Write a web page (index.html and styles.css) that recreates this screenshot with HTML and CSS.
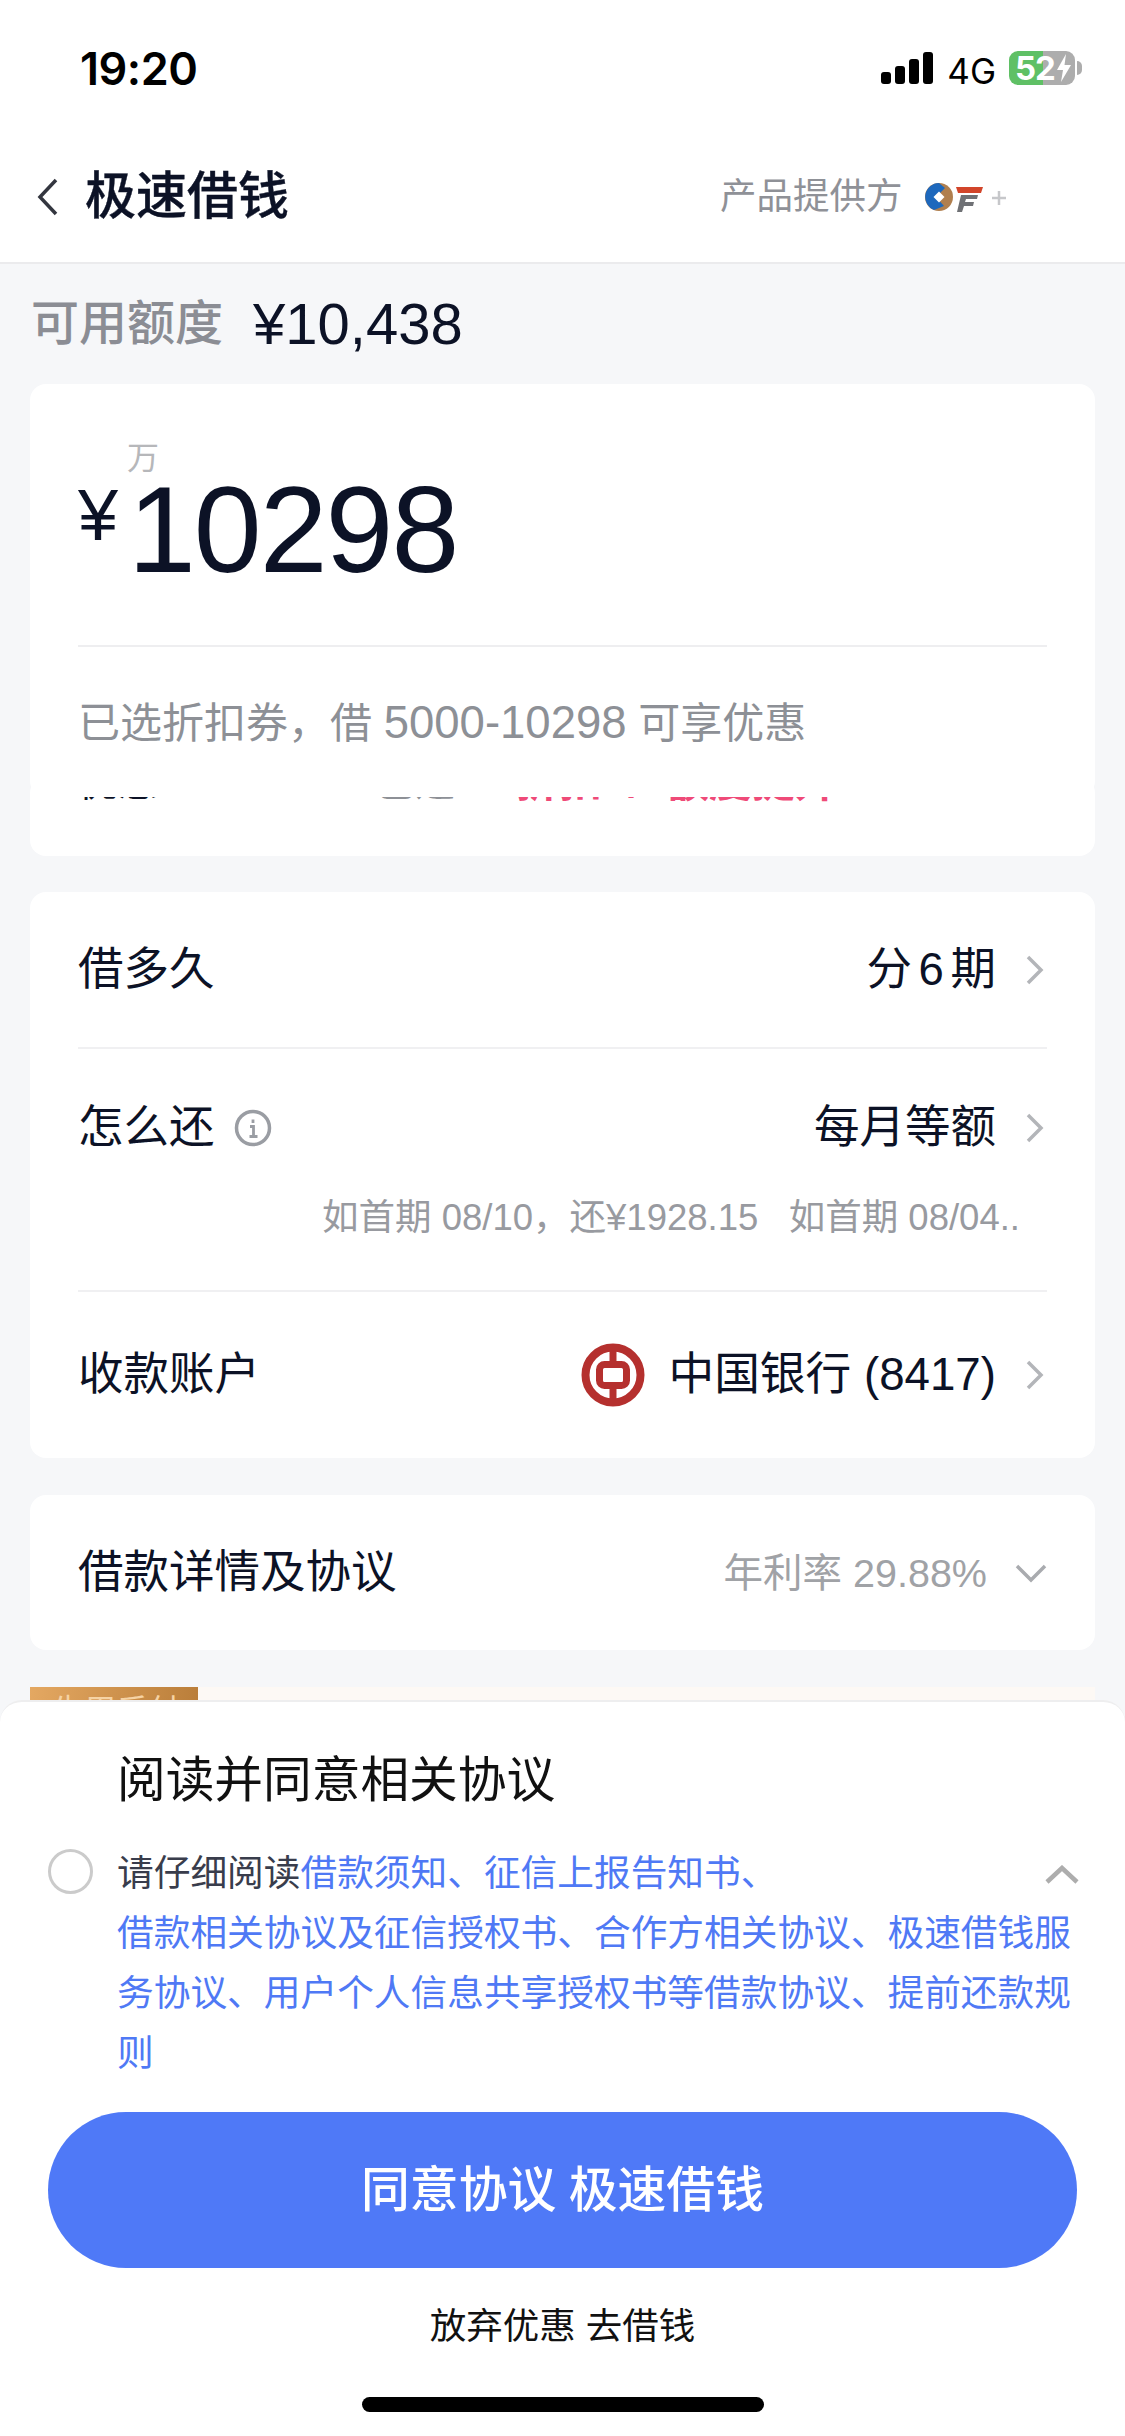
FILE: index.html
```html
<!DOCTYPE html>
<html lang="zh-CN">
<head>
<meta charset="utf-8">
<title>极速借钱</title>
<link rel="stylesheet" href="styles.css">
</head>
<body>
<div class="page">
  <header class="top">
    <div class="status">
      <span class="time">19:20</span>
      <div class="status-right">
        <div class="signal"><i class="b1"></i><i class="b2"></i><i class="b3"></i><i class="b4"></i></div>
        <span class="net">4G</span>
        <div class="battery">
          <span class="batt-num">52</span>
          <svg class="bolt" viewBox="0 0 16 28" width="16" height="28"><path d="M10 0 1 16h6l-2 12 10-17H8.500z" fill="#fff"/></svg>
        </div>
        <i class="batt-cap"></i>
      </div>
    </div>
    <nav class="nav">
      <svg class="back" viewBox="0 0 22 38" width="22" height="38"><path d="M19 2 3 19l16 17" fill="none" stroke="#33363f" stroke-width="3.500"/></svg>
      <h1 class="nav-title">极速借钱</h1>
      <span class="provider">产品提供方</span>
      <svg class="logo" viewBox="0 0 60 32" width="60" height="32">
        <circle cx="14" cy="16" r="14" fill="#b07f4e"/>
        <path d="M14 2A14 14 0 0 0 9 29l10-4-8-9 9-9z" fill="#1d68bd"/>
        <path d="M14 10.500l5.500 5.500-5.500 5.500L8.500 16z" fill="#fff"/>
        <path d="M31 6h27l-2 6H33z" fill="#d2452a"/>
        <path d="M36 14h17l-1 4H41l-1 3h9l-1 4h-9l-2 6h-5z" fill="#6f7175"/>
      </svg>
      <svg class="plus" viewBox="0 0 16 16" width="16" height="16"><path d="M8 1v14M1 8h14" stroke="#c6c7ca" stroke-width="2.500"/></svg>
    </nav>
  </header>

  <main class="content">
    <div class="limit">
      <span class="limit-label">可用额度</span>
      <span class="limit-value">¥10,438</span>
    </div>

    <section class="card amount-card">
      <div class="amount-unit">万</div>
      <div class="amount-row"><span class="yen">¥</span><span class="amount">10298</span></div>
      <div class="amount-line"></div>
      <p class="amount-hint">已选折扣券，借 <span class="hint-num">5000-10298</span> 可享优惠</p>
    </section>

    <section class="card peek-card">
      <div class="peek-row">
        <span class="peek-dark">优惠</span>
        <span class="peek-grey">已选</span>
        <span class="peek-pink">折扣 / 额度提升</span>
      </div>
    </section>

    <section class="card group">
      <div class="row row-first">
        <span class="label">借多久</span>
        <span class="value value-term">分 6 期</span>
        <svg class="chev" viewBox="0 0 20 30" width="20" height="30"><path d="M3 2l13 13L3 28" fill="none" stroke="#b3b5b9" stroke-width="3.500"/></svg>
      </div>
      <div class="row-block">
        <div class="row-inner">
          <span class="label">怎么还</span>
          <svg class="info" viewBox="0 0 38 38" width="38" height="38">
            <circle cx="19" cy="19" r="16.500" fill="none" stroke="#9a9da3" stroke-width="3.500"/>
            <path d="M19 10.500v3.500M16 17.500h3.500v10M15.500 27.500h8" fill="none" stroke="#9a9da3" stroke-width="2.800"/>
          </svg>
          <span class="value">每月等额</span>
          <svg class="chev" viewBox="0 0 20 30" width="20" height="30"><path d="M3 2l13 13L3 28" fill="none" stroke="#b3b5b9" stroke-width="3.500"/></svg>
        </div>
        <div class="sub">如首期 08/10，还¥1928.15&nbsp;&nbsp;&nbsp;如首期 08/04..</div>
      </div>
      <div class="row row-last">
        <span class="label">收款账户</span>
        <svg class="bank" viewBox="0 0 64 64" width="64" height="64">
          <circle cx="32" cy="32" r="27.500" fill="none" stroke="#b5302e" stroke-width="8"/>
          <path d="M32 4v56" stroke="#b5302e" stroke-width="7"/>
          <rect x="18.500" y="21.500" width="27" height="21" rx="5" fill="#fff" stroke="#b5302e" stroke-width="7"/>
        </svg>
        <span class="value value-bank">中国银行 (8417)</span>
        <svg class="chev" viewBox="0 0 20 30" width="20" height="30"><path d="M3 2l13 13L3 28" fill="none" stroke="#b3b5b9" stroke-width="3.500"/></svg>
      </div>
    </section>

    <section class="card detail">
      <span class="label">借款详情及协议</span>
      <span class="rate">年利率 29.88%</span>
      <svg class="chev-down" viewBox="0 0 32 20" width="32" height="20"><path d="M2 3l14 14L30 3" fill="none" stroke="#a9abaf" stroke-width="3.500"/></svg>
    </section>

    <section class="promo"><span class="promo-badge">先用后付</span></section>
  </main>

  <aside class="sheet">
    <h2 class="sheet-title">阅读并同意相关协议</h2>
    <div class="agree">
      <span class="check"></span>
      <p class="agree-text">请仔细阅读<a class="link">借款须知、征信上报告知书、<br>借款相关协议及征信授权书、合作方相关协议、极速借钱服务协议、用户个人信息共享授权书等借款协议、提前还款规则</a></p>
      <svg class="chev-up" viewBox="0 0 34 20" width="34" height="20"><path d="M2 17L17 3l15 14" fill="none" stroke="#adadad" stroke-width="4.500"/></svg>
    </div>
    <button class="cta">同意协议 极速借钱</button>
    <div class="skip">放弃优惠 去借钱</div>
    <div class="home"></div>
  </aside>
</div>
</body>
</html>
```
FILE: styles.css
```css
* { box-sizing: border-box; }
html, body { margin: 0; padding: 0; }
body {
  width: 1125px;
  height: 2436px;
  overflow: hidden;
  font-family: "Liberation Sans", "Noto Sans CJK SC", sans-serif;
  color: #0c1226;
  background: #f6f7f9;
}
h1, h2, p { margin: 0; font-weight: 400; }
.page { position: relative; width: 1125px; height: 2436px; overflow: hidden; }

.top { background: #fff; height: 264px; border-bottom: 2px solid #ebebed; }
.status { height: 110px; padding: 0 43px 0 80px; display: flex; justify-content: space-between; align-items: flex-start; }
.time { font-family: Inter, "Liberation Sans", sans-serif; font-size: 45px; font-weight: 600; color: #000; line-height: 50px; margin-top: 44px; letter-spacing: -0.500px; }
.status-right { display: flex; align-items: flex-start; margin-top: 51px; }
.signal { display: flex; align-items: flex-end; gap: 4px; height: 33px; width: 52px; margin-left: 1px; }
.signal i { display: block; width: 10px; background: #000; border-radius: 3px; }
.b1 { height: 12px; } .b2 { height: 18px; } .b3 { height: 25px; } .b4 { height: 32px; }
.net { font-family: Inter, "Liberation Sans", sans-serif; font-size: 35px; line-height: 40px; color: #000; margin: 0 13px 0 14px; }
.battery {
  width: 66px; height: 34px; border-radius: 9px;
  background: linear-gradient(90deg, #5fc065 0 52%, #adadad 52% 100%);
  display: flex; align-items: center; padding-left: 6px; gap: 1px;
}
.batt-num { font-family: Inter, "Liberation Sans", sans-serif; font-size: 33px; font-weight: 700; color: #fff; line-height: 34px; letter-spacing: -1px; }
.bolt { flex: none; }
.batt-cap { display: block; width: 5px; height: 14px; margin: 10px 0 0 2px; background: #adadad; border-radius: 0 5px 5px 0; }

.nav { height: 152px; display: flex; align-items: center; padding: 22px 0 0 37px; }
.back { flex: none; }
.nav-title { font-size: 51px; font-weight: 500; line-height: 60px; margin-left: 26px; color: #0c1226; -webkit-text-stroke: 0.400px #0c1226; }
.provider { font-size: 36.500px; line-height: 50px; color: #8f9197; margin-left: 431px; }
.logo { flex: none; margin-left: 22px; }
.plus { flex: none; margin-left: 6px; margin-top: 2px; }

.content { padding: 0 30px; }
.limit { height: 120px; display: flex; align-items: center; margin-left: 1px; }
.limit-label { font-size: 48px; color: #8b8d94; font-weight: 500; line-height: 60px; }
.limit-value { font-size: 58px; margin-left: 30px; line-height: 60px; color: #0c1226; }

.card { background: #fff; border-radius: 16px; }
.amount-card { position: relative; z-index: 1; height: 413px; padding: 57px 48px 0; }
.amount-unit { font-size: 32px; line-height: 34px; color: #b6b7ba; margin-left: 49px; }
.amount-row { display: flex; align-items: flex-start; height: 120px; margin-top: -5px; }
.yen { font-size: 72px; line-height: 72px; margin-top: 9px; width: 50px; color: #0c1226; }
.amount { font-size: 122px; line-height: 120px; letter-spacing: -2px; color: #0c1226; }
.amount-line { height: 2px; background: #eeeef0; margin-top: 55px; }
.amount-hint { font-size: 42px; line-height: 60px; color: #8d9096; margin-top: 46px; white-space: nowrap; }
.hint-num { font-size: 45.500px; }

.peek-card { margin-top: -20px; height: 79px; padding: 0 48px; overflow: hidden; }
.peek-row { display: grid; grid-template-columns: 297px 141px 1fr; font-size: 40px; line-height: 46px; margin-top: -18px; }
.peek-dark { color: #0c1226; }
.peek-grey { color: #8d9096; }
.peek-pink { color: #ef4a78; font-weight: 700; font-size: 43px; word-spacing: 14px; white-space: nowrap; }

.group { margin-top: 36px; padding: 0 48px; }
.row { display: flex; align-items: center; }
.row-first { height: 157px; border-bottom: 2px solid #f0f0f2; }
.row-block { padding: 49px 0 42px; border-bottom: 2px solid #f0f0f2; }
.row-inner { display: flex; align-items: center; height: 60px; }
.row-last { height: 166px; }
.label { font-size: 45.500px; line-height: 60px; color: #0c1226; }
.value { font-size: 45.500px; line-height: 60px; margin-left: auto; color: #0c1226; }
.value-term { word-spacing: -6px; }
.value-bank { margin-left: 23px; font-size: 45.700px; }
.chev { flex: none; margin-left: 29px; margin-right: 2px; }
.info { flex: none; margin-left: 19px; }
.bank { flex: none; margin-left: auto; }
.sub { font-size: 36.500px; line-height: 60px; color: #989aa0; margin-top: 30px; text-align: right; padding-right: 27px; white-space: nowrap; }

.detail { margin-top: 37px; height: 155px; padding: 0 48px; display: flex; align-items: center; }
.rate { font-size: 39.500px; line-height: 60px; color: #a0a2a6; margin-left: auto; }
.chev-down { flex: none; margin-left: 28px; }

.promo { margin-top: 37px; height: 60px; background: #fdf9f5; overflow: hidden; }
.promo-badge {
  display: block; width: 168px; height: 60px; padding: 4px 0 0 22px;
  font-size: 32px; line-height: 40px; color: #f6d3a4;
  background: linear-gradient(100deg, #e4a862, #b87c38);
  white-space: nowrap;
}

.sheet {
  position: absolute; left: 0; right: 0; top: 1700px; bottom: 0;
  background: #fff; border-top: 2px solid #eeeeef;
  border-radius: 22px 22px 0 0;
  padding-top: 48px;
}
.sheet-title { font-size: 48.700px; line-height: 60px; margin-left: 117px; color: #111; }
.agree { position: relative; display: flex; align-items: flex-start; margin-top: 34px; padding-left: 48px; }
.check { flex: none; width: 45px; height: 45px; margin-top: 5px; border: 3px solid #cbcbcb; border-radius: 50%; }
.agree-text { font-size: 36.700px; line-height: 60px; margin-left: 24px; width: 965px; color: #393d4c; }
.link { color: #4f79f5; }
.chev-up { position: absolute; left: 1045px; top: 21px; }
.cta {
  display: block; width: 1029px; height: 156px; margin: 28px 0 0 48px;
  border: 0; border-radius: 78px; background: #4f79f7; color: #fff;
  font-family: inherit; font-size: 48.800px; font-weight: 500; line-height: 60px;
  word-spacing: -1px;
}
.skip { font-size: 36.500px; line-height: 60px; text-align: center; margin-top: 29px; color: #111; }
.home { width: 402px; height: 15px; border-radius: 8px; background: #000; margin: 40px 0 0 362px; }
```
